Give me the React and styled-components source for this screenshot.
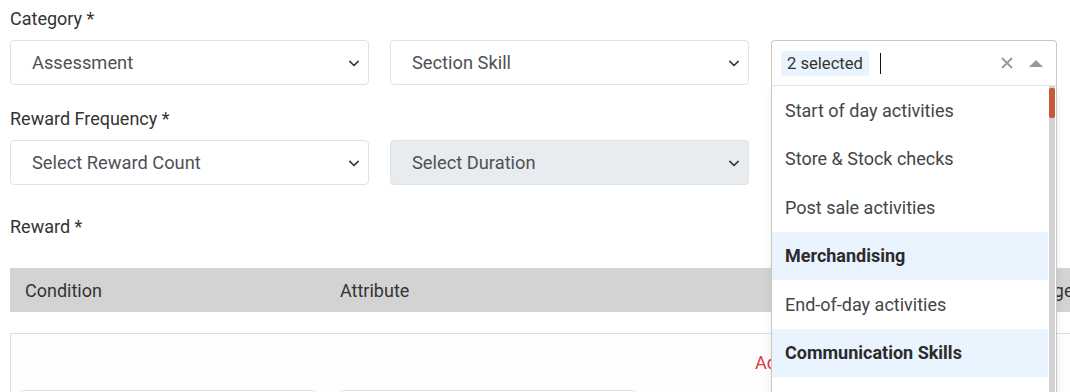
import React from 'react';
import styled, { createGlobalStyle } from 'styled-components';

const GlobalStyle = createGlobalStyle`
  body {
    margin: 0;
    background: #fff;
    font-family: Roboto, "Liberation Sans", sans-serif;
    overflow: hidden;
  }
`;

const options = [
  { label: 'Start of day activities', selected: false },
  { label: 'Store & Stock checks', selected: false },
  { label: 'Post sale activities', selected: false },
  { label: 'Merchandising', selected: true },
  { label: 'End-of-day activities', selected: false },
  { label: 'Communication Skills', selected: true },
  { label: 'Customer Service', selected: false },
];

const Chevron = () => (
  <svg width="14" height="10" viewBox="0 0 16 12">
    <path d="M3 4l5 5 5-5" fill="none" stroke="#343a40" strokeWidth="2" strokeLinecap="round" strokeLinejoin="round" />
  </svg>
);

const Select = ({ children, disabled }) => (
  <SelectBox $disabled={disabled}>
    <span>{children}</span>
    <Chevron />
  </SelectBox>
);

const MultiSelect = () => (
  <MultiWrap>
    <Control>
      <Chip>2 selected</Chip>
      <Caret />
      <Indicators>
        <svg width="14" height="14" viewBox="0 0 14 14">
          <path d="M2 2l10 10M12 2L2 12" stroke="#999" strokeWidth="1.8" />
        </svg>
        <svg width="16" height="10" viewBox="0 0 16 10">
          <path d="M1 9L8 2l7 7z" fill="#999" />
        </svg>
      </Indicators>
    </Control>
    <Menu>
      {options.map(({ label, selected }) => (
        <Option key={label} $selected={selected}>
          {label}
        </Option>
      ))}
      <Track>
        <Thumb />
      </Track>
    </Menu>
  </MultiWrap>
);

const App = () => {
  return (
    <>
      <GlobalStyle />
      <Page>
        <Label>Category *</Label>
        <Row>
          <Select>Assessment</Select>
          <Select>Section Skill</Select>
          <MultiSelect />
        </Row>

        <Label $top={23}>Reward Frequency *</Label>
        <Row>
          <Select>Select Reward Count</Select>
          <Select disabled>Select Duration</Select>
        </Row>

        <Label $top={31}>Reward *</Label>
        <TableHead>
          <HeadCell>Condition</HeadCell>
          <HeadCell>Attribute</HeadCell>
          <HeadCell>Range</HeadCell>
        </TableHead>

        <ConditionBox>
          <AddLink>Add Condition</AddLink>
          <InputRow>
            <Input />
            <Input />
          </InputRow>
        </ConditionBox>
      </Page>
    </>
  );
};

const Page = styled.div`
  width: 1300px;
  padding: 8px 0 0 10px;
`;

const Label = styled.div`
  margin-top: ${({ $top }) => $top || 0}px;
  margin-bottom: 11px;
  font-size: 18px;
  line-height: 21px;
  color: #333;
`;

const Row = styled.div`
  display: grid;
  grid-template-columns: 359px 359px 287px;
  column-gap: 21px;
  height: 45px;
  & > :nth-child(3) {
    margin-left: 1px;
  }
`;

const SelectBox = styled.div`
  box-sizing: border-box;
  height: 45px;
  display: flex;
  align-items: center;
  justify-content: space-between;
  padding: 0 7px 0 21px;
  border: 1px solid #dee2e6;
  border-radius: 4px;
  background: ${({ $disabled }) => ($disabled ? '#e9ecef' : '#fff')};
  font-size: 18.3px;
  color: #4d5157;
`;

const MultiWrap = styled.div`
  position: relative;
  z-index: 2;
`;

const Control = styled.div`
  box-sizing: border-box;
  height: 46px;
  display: flex;
  align-items: center;
  padding: 0 12px 0 9px;
  border: 1px solid #c8c8c8;
  border-bottom-color: #e6e6e6;
  border-radius: 4px 4px 0 0;
  background: #fff;
`;

const Chip = styled.span`
  padding: 3px 6px;
  background: #e9f4fe;
  border-radius: 2px;
  font-size: 16.6px;
  line-height: 19px;
  color: #333;
`;

const Caret = styled.span`
  width: 1px;
  height: 21px;
  margin-left: 11px;
  background: #111;
`;

const Indicators = styled.div`
  margin-left: auto;
  display: flex;
  align-items: center;
  gap: 14px;
`;

const Menu = styled.div`
  position: absolute;
  top: 100%;
  left: 0;
  right: 0;
  box-sizing: border-box;
  padding-right: 8px;
  border-left: 1px solid #c8c8c8;
  border-right: 1px solid #c8c8c8;
  background: #fff;
  box-shadow: 0 4px 8px rgba(0, 0, 0, 0.08);
`;

const Option = styled.div`
  height: 48.5px;
  display: flex;
  align-items: center;
  padding-left: 13px;
  font-size: 18px;
  font-weight: ${({ $selected }) => ($selected ? 700 : 400)};
  color: ${({ $selected }) => ($selected ? '#2b2b2b' : '#454545')};
  background: ${({ $selected }) => ($selected ? '#e9f4ff' : '#fff')};
  white-space: nowrap;
`;

const Track = styled.div`
  position: absolute;
  top: 0;
  bottom: 0;
  right: 1px;
  width: 6px;
  background: #d2d2d2;
`;

const Thumb = styled.div`
  margin-top: 2px;
  height: 30px;
  border-radius: 2px;
  background: #c8583a;
`;

const TableHead = styled.div`
  margin-top: 31px;
  height: 44px;
  display: grid;
  grid-template-columns: 315px 683px 1fr;
  align-items: center;
  padding-left: 15px;
  background: #d3d3d3;
`;

const HeadCell = styled.div`
  font-size: 18px;
  color: #333;
`;

const ConditionBox = styled.div`
  margin-top: 21px;
  height: 120px;
  box-sizing: border-box;
  border: 1px solid #dedede;
  background: #fdfdfd;
  padding: 0 0 0 9px;
`;

const AddLink = styled.div`
  height: 56px;
  padding-left: 735px;
  display: flex;
  align-items: center;
  font-size: 18px;
  color: #e0393e;
`;

const InputRow = styled.div`
  display: flex;
  gap: 24px;
`;

const Input = styled.div`
  box-sizing: border-box;
  width: 296px;
  height: 40px;
  border: 1px solid #ddd;
  border-radius: 4px;
  background: #fff;
`;

export default App;
